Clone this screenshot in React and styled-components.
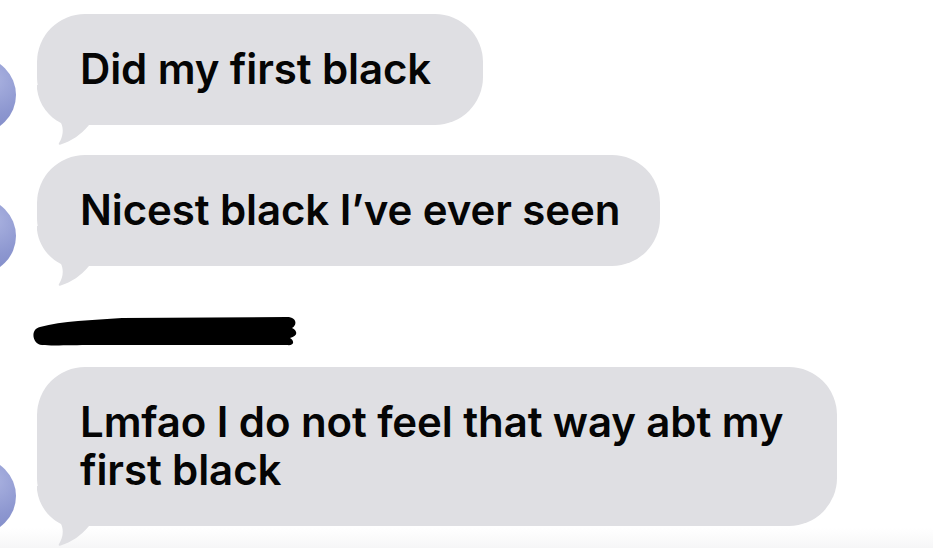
import React from 'react';
import styled, { createGlobalStyle } from 'styled-components';

const Global = createGlobalStyle`
  html, body { margin: 0; padding: 0; background: #ffffff; }
  body { width: 933px; height: 548px; overflow: hidden; }
`;

const Page = styled.div`
  position: relative;
  width: 933px;
  height: 548px;
  box-sizing: border-box;
  padding-top: 14px;
  display: flex;
  flex-direction: column;
  font-family: Inter, "Noto Sans", "Liberation Sans", sans-serif;
  background: linear-gradient(to bottom, #ffffff 0, #ffffff 528px, #f6f6f7 548px);
  overflow: hidden;
`;

const Row = styled.div`
  display: flex;
  align-items: flex-end;
  margin-top: ${p => p.$gap || 0}px;
`;

const Avatar = styled.div`
  flex: none;
  width: 76px;
  height: 76px;
  border-radius: 50%;
  margin-left: -60px;
  margin-right: 21px;
  margin-bottom: -8px;
  background: radial-gradient(circle at 70% 30%, #aab2e0 0%, #8d97d0 45%, #7580c0 100%);
`;

const Bubble = styled.div`
  position: relative;
  box-sizing: border-box;
  max-width: ${p => p.$max || 900}px;
  padding: 31px ${p => p.$right || 44}px 32px 43px;
  border-radius: 48px;
  background: #dfdfe3;
  color: #050505;
  font-size: 42px;
  font-weight: 600;
  line-height: 48px;
  letter-spacing: -0.1px;
`;

const Tail = styled.svg`
  position: absolute;
  left: 0;
  bottom: -20px;
  width: 70px;
  height: 60px;
`;

const Redacted = styled.svg`
  display: block;
  margin: 50px 0 0 32px;
  width: 268px;
  height: 31px;
`;

function BubbleTail() {
  return (
    <Tail viewBox="0 0 70 60">
      <path
        d="M0 0 L0 4 C2 20 12 32 24 38 C27 44 26 52 22 58 C21 60 23 60 25 59 C34 56 44 50 52 40 L70 40 L70 0 Z"
        fill="#dfdfe3"
      />
    </Tail>
  );
}

function Message({ text, gap, max, right }) {
  return (
    <Row $gap={gap}>
      <Avatar />
      <Bubble $max={max} $right={right}>
        <BubbleTail />
        <span style={{ position: 'relative' }}>{text}</span>
      </Bubble>
    </Row>
  );
}

export default function App() {
  return (
    <>
      <Global />
      <Page>
        <Message text="Did my first black" right={52} />
        <Message text="Nicest black I’ve ever seen" gap={30} right={40} />
        <Redacted viewBox="0 0 268 31">
          <path
            d="M8 11 C30 5 60 4 90 2 L255 1 C264 1 266 8 260 12 C266 15 266 20 258 22 C263 25 262 30 255 29 L60 29 C40 29 20 30 10 29 C0 28 -2 13 8 11 Z"
            fill="#000"
          />
        </Redacted>
        <Message text="Lmfao I do not feel that way abt my first black" gap={20} max={800} right={30} />
      </Page>
    </>
  );
}
